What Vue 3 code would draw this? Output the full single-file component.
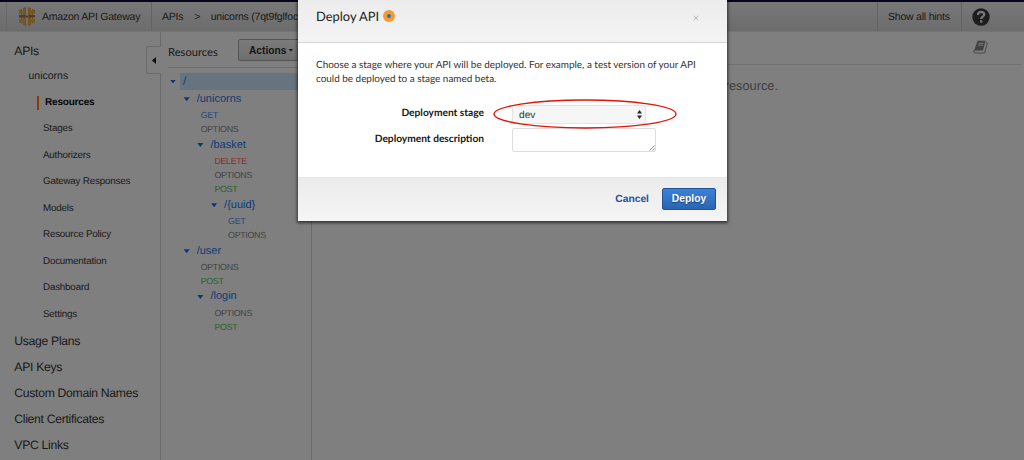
<script setup>
const stages = [
  'Stages', 'Authorizers', 'Gateway Responses', 'Models', 'Resource Policy',
  'Documentation', 'Dashboard', 'Settings',
]
const sections = ['Usage Plans', 'API Keys', 'Custom Domain Names', 'Client Certificates', 'VPC Links']
const tree = [
  { t: '/unicorns', d: 1, k: 'folder' },
  { t: 'GET', d: 1, k: 'get' },
  { t: 'OPTIONS', d: 1, k: 'options' },
  { t: '/basket', d: 2, k: 'folder' },
  { t: 'DELETE', d: 2, k: 'delete' },
  { t: 'OPTIONS', d: 2, k: 'options' },
  { t: 'POST', d: 2, k: 'post' },
  { t: '/{uuid}', d: 3, k: 'folder' },
  { t: 'GET', d: 3, k: 'get' },
  { t: 'OPTIONS', d: 3, k: 'options' },
  { t: '/user', d: 1, k: 'folder' },
  { t: 'OPTIONS', d: 1, k: 'options' },
  { t: 'POST', d: 1, k: 'post' },
  { t: '/login', d: 2, k: 'folder' },
  { t: 'OPTIONS', d: 2, k: 'options' },
  { t: 'POST', d: 2, k: 'post' },
]
</script>

<template>
  <div class="page">
    <header class="topbar">
      <div class="brand">
        <svg class="logo" width="16" height="19" viewBox="0 0 16 19">
          <path d="M0 3l3-1v14l-3-1v-3h2V7H0zM16 3l-3-1v14l3-1v-3h-2V7h2z" fill="#63492a" />
          <path d="M4 1l3-1v19l-3-1zM9 0l3 1v17l-3 1z" fill="#715324" />
          <path d="M0 3.500h6.500v3.500H0zM9.500 3.500H16v3.500H9.500zM0 12h6.500v3.500H0zM9.500 12H16v3.500H9.500z" fill="#765824" />
          <path d="M0 8h6v2.500H0zM10 8h6v2.500h-6zM6.500 8.500h3v2h-3z" fill="#543d1c" />
        </svg>
        <span class="brand-name">Amazon API Gateway</span>
      </div>
      <nav class="crumbs">
        <span class="c1">APIs</span><span class="sep">&gt;</span><span class="c2">unicorns (7qt9fglfoc)</span>
      </nav>
      <div class="hints"><span>Show all hints</span></div>
      <div class="help">
        <svg width="18" height="18" viewBox="0 0 18 18">
          <circle cx="9" cy="9" r="8.700" fill="#1d1d1d" />
          <path d="M6 7c0-4 6.200-4 6.200-.5C12.200 8.600 9.200 8.600 9.200 11" fill="none" stroke="#777" stroke-width="2.300" />
          <path d="M8 12.300h2.400v2.300H8z" fill="#777" />
        </svg>
      </div>
    </header>

    <div class="body">
      <aside class="sidebar">
        <div class="top first"><span>APIs</span></div>
        <div class="api"><span>unicorns</span></div>
        <div class="sub active"><span>Resources</span></div>
        <div v-for="s in stages" :key="s" class="sub"><span>{{ s }}</span></div>
        <div class="sections">
          <div v-for="s in sections" :key="s" class="top"><span>{{ s }}</span></div>
        </div>
        <div class="handle">
          <svg width="4" height="7" viewBox="0 0 4 7"><path d="M4 0v7L0 3.500z" fill="#0c0c0c" /></svg>
        </div>
      </aside>

      <section class="resources">
        <div class="res-head">
          <span class="res-title">Resources</span>
          <button class="actions">Actions<i class="caret"></i></button>
        </div>
        <div class="root-row">
          <i class="tri"></i>
          <span class="root">/</span>
        </div>
        <div v-for="(n, i) in tree" :key="i" class="node" :class="[n.k, 'd' + n.d]">
          <i v-if="n.k === 'folder'" class="tri"></i><span>{{ n.t }}</span>
        </div>
      </section>

      <main class="detail">
        <div class="detail-head">
          <svg width="15" height="15" viewBox="0 0 15 15">
            <path d="M4.500 .8h8L10 10.500H1.200z" fill="#424242" />
            <path d="M5.700 3.300h5M5.200 5.200h5" stroke="#7f7f7f" stroke-width=".9" />
            <path d="M13 2.200l1.300 1L11.700 13H2.500C.6 13 .5 11.500 1.200 10" fill="none" stroke="#484848" />
          </svg>
        </div>
        <p class="message">No methods defined for the resource.</p>
      </main>
    </div>

    <div class="modal">
      <div class="modal-head">
        <span class="modal-title">Deploy API</span>
        <svg class="dot" width="12" height="12" viewBox="0 0 12 12"><circle cx="6" cy="6" r="6" fill="#f39b35" /><circle cx="6" cy="6" r="1.900" fill="#286ab5" /></svg>
        <svg class="close" width="6" height="6" viewBox="0 0 6 6"><path d="M.7.700l4.600 4.600M5.300.700L.7 5.300" stroke="#bbb" /></svg>
      </div>
      <div class="modal-body">
        <p class="intro"><span class="l1">Choose a stage where your API will be deployed. For example, a test version of your API</span><br /><span class="l2">could be deployed to a stage named beta.</span></p>
        <div class="row stage-row">
          <label><span>Deployment stage</span></label>
          <div class="select">
            <span>dev</span>
            <svg width="5" height="9" viewBox="0 0 5 9"><path d="M0 3.600L2.500 0 5 3.600zM0 5.400h5L2.500 9z" fill="#222" /></svg>
          </div>
        </div>
        <div class="row desc-row">
          <label><span>Deployment description</span></label>
          <div class="textarea">
            <svg width="6" height="6" viewBox="0 0 6 6"><path d="M.5 5.500l5-5M3.300 5.500l2.200-2.200" stroke="#777" stroke-width=".8" /></svg>
          </div>
        </div>
        <svg class="ring" width="186" height="32" viewBox="0 0 186 32">
          <ellipse cx="93" cy="16" rx="91" ry="14" fill="none" stroke="#e01507" stroke-width="1.300" />
        </svg>
      </div>
      <div class="modal-foot">
        <a class="cancel">Cancel</a>
        <button class="deploy">Deploy</button>
      </div>
    </div>
  </div>
</template>

<style>
body { margin: 0; overflow: hidden; }
</style>

<style scoped>
* { box-sizing: border-box; }
.page {
  position: relative; width: 1024px; height: 460px; overflow: hidden;
  background: #7f7f7f; color: #191919; text-rendering: geometricPrecision;
  font-family: "Liberation Sans", Arial, sans-serif; font-size: 10px;
  display: flex; flex-direction: column;
}
span, a { white-space: nowrap; }
.topbar {
  height: 32px; flex: none; display: flex; border-top: 2px solid #07051b;
  border-bottom: 1px solid #747474; background: linear-gradient(#787878, #6c6c6c);
  line-height: 30px; font-size: 10.500px; letter-spacing: -.22px;
}
.brand { margin-left: 6px; width: 146px; border-left: 1px solid #686868; border-right: 1px solid #626262; display: flex; align-items: center; padding-left: 12px; }
.brand-name { margin-left: 7px; }
.crumbs { display: flex; padding-left: 10px; flex: 1; }
.sep { margin: 0 10.500px 0 11px; }
.hints { width: 85px; padding-left: 10px; border-left: 1px solid #626262; border-right: 1px solid #626262; font-size: 10.500px; }
.help { width: 62px; padding-left: 10px; display: flex; align-items: center; }
.body { display: flex; flex: 1; min-height: 0; }
.sidebar { position: relative; width: 161px; border-right: 1px solid #6b6b6b; padding-top: 6px; }
.top { height: 25.800px; line-height: 25.800px; padding-left: 14.300px; font-size: 12.200px; letter-spacing: -.3px; }
.first { line-height: 26.500px; }
.sections { padding-top: 1.200px; }
.api { height: 26px; line-height: 25px; padding-left: 28.500px; font-size: 10.500px; }
.sub { height: 26.500px; line-height: 26.500px; padding-left: 43px; font-size: 9.800px; letter-spacing: -.19px; }
.active { display: flex; align-items: center; padding-left: 37px; font-weight: bold; color: #060606; font-size: 10px; }
.active::before { content: ""; width: 2px; height: 14px; background: #8a3a09; margin-right: 6px; }
.handle {
  position: absolute; left: 146px; top: 14px; width: 15px; height: 28px; background: #7f7f7f;
  border: 1px solid #6b6b6b; border-right: 0; border-radius: 3px 0 0 3px;
  display: flex; align-items: center; padding-left: 5px;
}
.resources { width: 151px; border-right: 1px solid #6b6b6b; }
.res-head { height: 36px; margin-left: 7px; border-bottom: 1px solid #6d6d6d; display: flex; padding-top: 7px; }
.res-title { font-family: Lato, sans-serif; font-size: 11.200px; line-height: 28px; width: 70px; }
.actions {
  width: 64px; height: 22px; flex: none; background: linear-gradient(#7b7b7b, #6e6e6e); border: 1px solid #555;
  border-radius: 2px; padding: 0 0 0 10px; display: flex; align-items: center;
  font: bold 10.200px "Liberation Sans", Arial, sans-serif; color: #151515;
}
.caret { width: 5px; height: 3px; background: #151515; clip-path: polygon(0 0, 100% 0, 50% 100%); margin-left: 2px; }
.tri { flex: none; width: 6px; height: 4px; background: #0c3770; clip-path: polygon(0 0, 100% 0, 50% 100%); }
.root-row { display: flex; align-items: center; height: 17px; margin-top: 5px; padding-left: 9px; }
.root { flex: 1; height: 17px; line-height: 18px; margin-left: 4px; padding-left: 3px; background: #66747f; color: #0d3b75; font-size: 11.500px; }
.root-row + .node { margin-top: .7px; }
.node { display: flex; align-items: center; height: 14.380px; line-height: 14.380px; font-size: 8.900px; letter-spacing: -.33px; padding-left: calc(26px + var(--d) * 13.700px); }
.d1 { --d: 1; } .d2 { --d: 2; } .d3 { --d: 3; }
.folder { height: 17.100px; line-height: 17.100px; font-size: 11px; letter-spacing: 0; color: #0d3b75; padding-left: calc(9px + var(--d) * 13.700px); }
.folder .tri { margin-right: 7px; }
.get { color: #244b7c; } .options { color: #424242; } .delete { color: #882d2a; } .post { color: #28622f; }
.detail { flex: 1; }
.detail-head { height: 33px; margin-right: 3px; border-bottom: 1px solid #707070; display: flex; justify-content: flex-end; padding: 8px 33px 0 0; }
.message { margin: 13px 246px 0 0; text-align: right; font-size: 12.800px; line-height: 16px; color: #404040; }
.modal {
  position: absolute; left: 298px; top: 0; width: 429px; height: 221px; background: #fff;
  box-shadow: 0 1px 3px 1px rgba(0, 0, 0, .6); display: flex; flex-direction: column; font-family: Lato, sans-serif;
}
.modal-head { height: 43px; border-bottom: 1px solid #d4d4d4; background: linear-gradient(#ececec, #f4f4f4); display: flex; align-items: center; padding: 0 28px 10px 18px; }
.modal-title { font-size: 12.900px; line-height: 16px; color: #222; }
.dot { margin-left: 4px; }
.close { margin-left: auto; margin-top: 3px; }
.modal-body { position: relative; height: 134px; padding: 15px 0 0 18px; }
.intro { margin: 0; padding-top: 1px; font-size: 9.930px; line-height: 13.700px; color: #333; }
.row { display: flex; }
.row label { width: 168px; text-align: right; font-size: 10.200px; font-weight: bold; line-height: 16px; color: #161616; }
.stage-row { margin-top: 19px; }
.select { width: 134px; height: 19px; margin-left: 28px; border: 1px solid #e4e4e4; border-radius: 3px; background: #f6f6f6; display: flex; align-items: center; justify-content: space-between; padding: 0 3px 0 6px; font: 10.200px "Liberation Sans", Arial, sans-serif; color: #333; }
.select span { padding-top: 2px; }
.desc-row { margin-top: 4px; }
.desc-row label { line-height: 22px; }
.textarea { width: 144px; height: 24px; margin-left: 28px; border: 1px solid #dcdcdc; border-radius: 2px; display: flex; justify-content: flex-end; align-items: flex-end; }
.ring { position: absolute; left: 194px; top: 55px; }
.modal-foot { flex: 1; background: linear-gradient(#ebebeb, #f5f5f5); border-top: 1px solid #e6e6e6; display: flex; align-items: center; justify-content: flex-end; padding-right: 11px; font-family: "Liberation Sans", Arial, sans-serif; }
.cancel { color: #1d4f9f; font-weight: bold; font-size: 10.300px; margin-right: 13px; }
.deploy { width: 54px; height: 22px; padding: 0; margin-top: -2px; border: 1px solid #1e5198; border-radius: 2px; background: linear-gradient(#3d80d8, #2a65b3); color: #fff; font: bold 10.300px "Liberation Sans", Arial, sans-serif; text-shadow: 0 1px 1px #173d72; }
</style>
